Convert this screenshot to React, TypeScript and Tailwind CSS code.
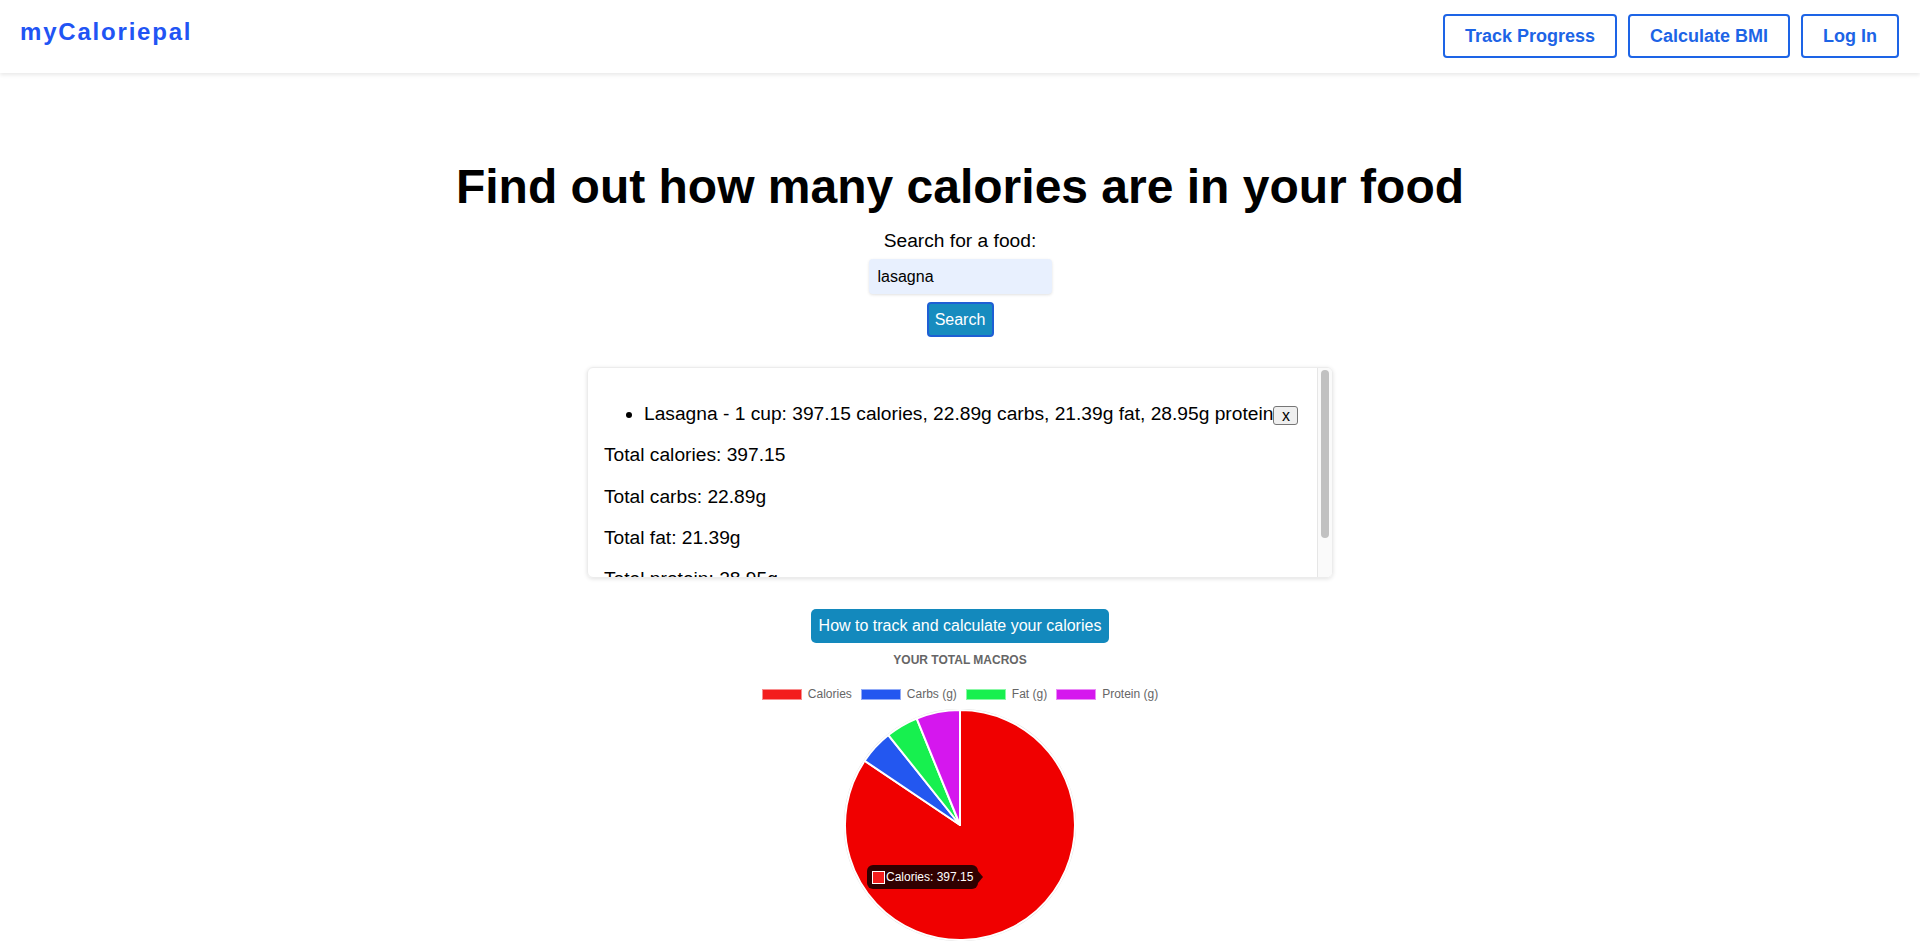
import React from "react";

const FONT = { fontFamily: '"Liberation Sans", Arial, Helvetica, sans-serif' };

interface Macro {
  label: string;
  value: number;
  legend: string;
  fill: string;
}

const MACROS: Macro[] = [
  { label: "Calories", value: 397.15, legend: "#f31d1d", fill: "#f00000" },
  { label: "Carbs (g)", value: 22.89, legend: "#2357f0", fill: "#2357f0" },
  { label: "Fat (g)", value: 21.39, legend: "#17f04f", fill: "#17f04f" },
  { label: "Protein (g)", value: 28.95, legend: "#d517ee", fill: "#d517ee" },
];

function slicePath(cx: number, cy: number, r: number, a0: number, a1: number) {
  // angles in degrees, clockwise from 12 o'clock
  const p = (a: number) => {
    const rad = (a * Math.PI) / 180;
    return [cx + r * Math.sin(rad), cy - r * Math.cos(rad)];
  };
  const [x0, y0] = p(a0);
  const [x1, y1] = p(a1);
  const large = a1 - a0 > 180 ? 1 : 0;
  return `M${cx},${cy} L${x0},${y0} A${r},${r} 0 ${large} 1 ${x1},${y1} Z`;
}

function PieChart() {
  const total = MACROS.reduce((s, m) => s + m.value, 0);
  let start = 0;
  const slices = MACROS.map((m) => {
    const sweep = (m.value / total) * 360;
    const d = slicePath(116, 116, 115, start, start + sweep);
    start += sweep;
    return { d, fill: m.fill, key: m.label };
  });

  return (
    <div className="relative h-[232px] w-[232px]">
      <svg width="232" height="232" viewBox="0 0 232 232">
        <circle cx="116" cy="116" r="115.5" fill="none" stroke="#dedede" strokeWidth="1.5" />
        {slices.map((s) => (
          <path key={s.key} d={s.d} fill={s.fill} stroke="#ffffff" strokeWidth="2" strokeLinejoin="round" />
        ))}
      </svg>

      {/* hover tooltip */}
      <div className="absolute left-[23px] top-[156px] flex items-center">
        <div className="flex h-[24px] items-center gap-[1px] rounded-[6px] bg-black/80 px-[5px]">
          <span className="h-[13px] w-[13px] border border-white bg-[#f31d1d]" />
          <span className="text-[12px] leading-[14px] text-white">Calories: 397.15</span>
        </div>
        <span className="h-0 w-0 border-y-[6px] border-l-[5px] border-y-transparent border-l-black/80" />
      </div>
    </div>
  );
}

export default function App() {
  return (
    <div className="h-[943px] overflow-hidden bg-white text-black" style={FONT}>
      {/* Header */}
      <header className="flex h-[73px] items-start justify-between bg-white pl-[20px] pr-[21px] shadow-[0_2px_4px_rgba(0,0,0,0.09)]">
        <div className="mt-[18px] text-[24px] font-bold leading-[28px] tracking-[1.8px] text-[#2154f4]">
          myCaloriepal
        </div>
        <nav className="mt-[14px] flex gap-[11px]">
          {["Track Progress", "Calculate BMI", "Log In"].map((label) => (
            <button
              key={label}
              className="h-[44px] rounded-[4px] border-2 border-[#1d64e6] bg-white px-[20px] text-[18px] font-bold leading-[20px] text-[#1d64e6]"
            >
              {label}
            </button>
          ))}
        </nav>
      </header>

      <main className="flex flex-col items-center">
        <h1 className="mt-[86px] text-[48px] font-bold leading-[55px]">
          Find out how many calories are in your food
        </h1>

        <label className="mt-[16px] text-[19.2px] leading-[22px]">Search for a food:</label>
        <input
          readOnly
          value="lasagna"
          className="mt-[7px] h-[35px] w-[183px] rounded-[4px] bg-[#e8f0fe] pl-[9px] text-[16px] shadow-[0_1px_3px_rgba(0,0,0,0.12)] outline-none"
        />
        <button className="mt-[8px] flex h-[35px] w-[67px] items-center justify-center rounded-[4px] border-2 border-[#1e5fd4] bg-[#178cbf] text-[16px] text-white">
          Search
        </button>

        {/* Results */}
        <div className="mt-[30px] flex h-[211px] w-[746px] overflow-hidden rounded-[6px] border border-[#ececec] shadow-[0_1px_4px_rgba(0,0,0,0.12)]">
          <div className="flex-1 overflow-hidden px-[16px] pt-[16px] text-[19.2px] leading-[22px]">
            <ul className="my-[19.2px] list-disc pl-[40px]">
              <li>
                Lasagna - 1 cup: 397.15 calories, 22.89g carbs, 21.39g fat, 28.95g protein
                <button className="inline-flex h-[19px] w-[25px] items-center justify-center rounded-[3px] border border-[#767676] bg-[#efefef] align-middle text-[16px] leading-[15px]">
                  x
                </button>
              </li>
            </ul>
            <p className="my-[19.2px]">Total calories: 397.15</p>
            <p className="my-[19.2px]">Total carbs: 22.89g</p>
            <p className="my-[19.2px]">Total fat: 21.39g</p>
            <p className="my-[19.2px]">Total protein: 28.95g</p>
          </div>
          <div className="w-[15px] border-l border-[#e6e6e6] bg-[#fafafa] pt-[2px]">
            <div className="mx-auto h-[168px] w-[8px] rounded-full bg-[#c1c1c1]" />
          </div>
        </div>

        <button className="mt-[31px] h-[34px] rounded-[5px] bg-[#1389bd] px-[8px] text-[16px] text-white">
          How to track and calculate your calories
        </button>

        {/* Chart */}
        <div className="mt-[10px] text-[12px] font-bold leading-[14px] text-[#666666]">YOUR TOTAL MACROS</div>
        <div className="mt-[20px] flex h-[14px] items-center gap-[9px]">
          {MACROS.map((m) => (
            <div key={m.label} className="flex items-center gap-[6px]">
              <span
                className="h-[11px] w-[40px] border border-white/50"
                style={{ backgroundColor: m.legend }}
              />
              <span className="text-[12px] leading-[14px] text-[#666666]">{m.label}</span>
            </div>
          ))}
        </div>
        <div className="mt-[8px]">
          <PieChart />
        </div>
      </main>
    </div>
  );
}
